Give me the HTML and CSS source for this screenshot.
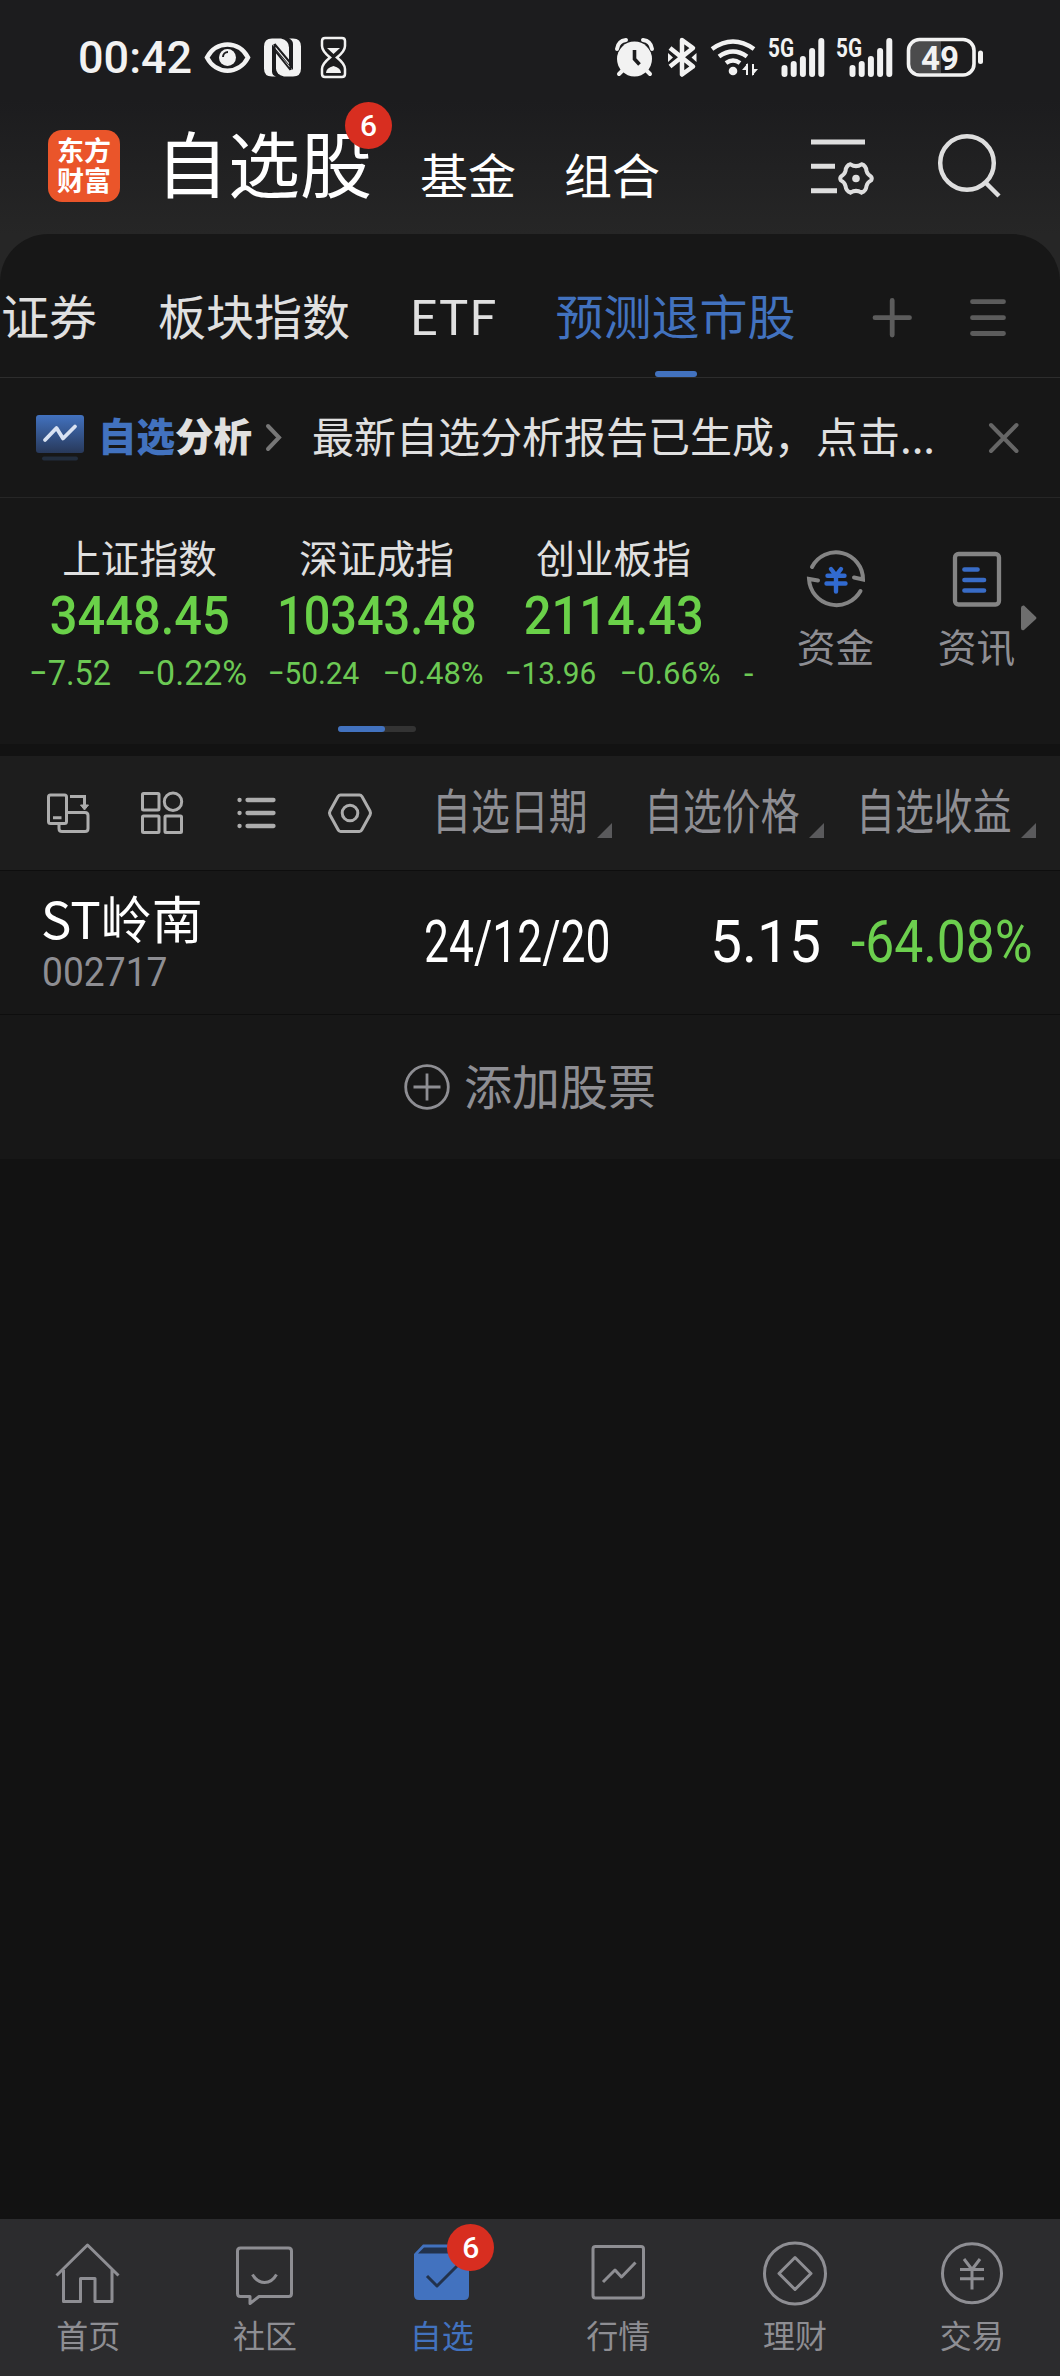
FILE: index.html
```html
<!DOCTYPE html>
<html lang="zh-CN">
<head>
    <meta charset="UTF-8">
    <meta name="viewport" content="width=device-width, initial-scale=1.0">
    <title>自选股</title>
    <link rel="stylesheet" href="styles.css">
</head>
<body>
    <div class="top">
        <!-- 状态栏 -->
        <div class="status-bar">
            <span class="clock">00:42</span>
            <svg class="status-left" width="146" height="48" viewBox="203 34 146 48">
                <path d="M207 58.500C216 41 239 41 248 58.500C239 76 216 76 207 58.500Z" fill="none" stroke="#f2f2f2" stroke-width="4.500"/>
                <circle cx="227.500" cy="58.500" r="8.500" fill="#f2f2f2"/>
                <path d="M223 58a5 5 0 0 1 5-5" fill="none" stroke="#1c1c1e" stroke-width="2"/>
                <path d="M272 39.500h9q8 2 8 9v17l-17-20v27q0 4 4 5h-4q-8 0-8-8v-22q0-8 8-8z" fill="#f2f2f2"/>
                <path d="M289 39.500h4q8 0 8 8v22q0 8-8 8h-9q-8-2-8-8V52l17 19V45q0-4-4-5.500z" fill="#f2f2f2"/>
                <path d="M274.500 45v24q0 6 5 8M290.500 71V46q0-5-4-7M274.500 45l16 19M274.500 51l16 20" fill="none" stroke="#1c1c1e" stroke-width="2"/>
                <path d="M325 39h17q3 0 3 3v5q0 5-8 11.500q8 6.500 8 11.500v5q0 3-3 3h-17q-3 0-3-3v-5q0-5 8-11.500q-8-6.500-8-11.500v-5q0-3 3-3z" fill="none" stroke="#f2f2f2" stroke-width="2.500"/>
                <path d="M327 49h13l-6.500 6zM326 74q0-5 7.500-7q7.500 2 7.500 7z" fill="#f2f2f2"/>
            </svg>
            <svg class="status-right" width="376" height="48" viewBox="612 34 376 48" fill="#f2f2f2">
                <!-- 闹钟 -->
                <circle cx="634.500" cy="60" r="17.500"/>
                <path d="M617 50q1-8 9-9M652 50q-1-8-9-9M623 71l-4 4M646 71l4 4" stroke="#f2f2f2" stroke-width="4" fill="none" stroke-linecap="round"/>
                <path d="M634.500 51v9l5 5.500" stroke="#1c1c1e" stroke-width="3.600" fill="none"/>
                <!-- 蓝牙 -->
                <path d="M670 49l23 18.500l-11 8V41l11 8L670 67.500" fill="none" stroke="#f2f2f2" stroke-width="4.500" stroke-linejoin="round"/>
                <path d="M668 54v9l5-4.500zM696.500 54v9l-5-4.500z"/>
                <!-- 无线网络 -->
                <path d="M712 50q21-15 42 0M719 57.500q14-10 28 0M726 64q7-5 14 0" fill="none" stroke="#f2f2f2" stroke-width="4.500"/>
                <circle cx="733" cy="72" r="4.300"/>
                <path d="M742 71h6v-7zM752 70h6l-6 7z"/>
                <path d="M747 65v11M753 65v11" stroke="#f2f2f2" stroke-width="2"/>
                <!-- 信号 -->
                <text x="768" y="58" class="sig-text" textLength="26" lengthAdjust="spacingAndGlyphs">5G</text>
                <path d="M784.500 69v6M793.700 65v10M802.900 60v15M812.100 52v23M821.300 42v33" stroke="#f2f2f2" stroke-width="6" stroke-linecap="round"/>
                <text x="836" y="58" class="sig-text" textLength="26" lengthAdjust="spacingAndGlyphs">5G</text>
                <path d="M852.500 69v6M861.700 65v10M870.900 60v15M880.100 52v23M889.300 42v33" stroke="#f2f2f2" stroke-width="6" stroke-linecap="round"/>
                <!-- 电池 -->
                <path d="M941 42h-21q-10 0-10 10v12q0 10 10 10h21z" fill="#4b4b4c"/>
                <rect x="908.500" y="40.500" width="65.500" height="35.500" rx="11" fill="none" stroke="#f2f2f2" stroke-width="3.600"/>
                <rect x="978" y="51.500" width="5" height="13.500" rx="2.500"/>
                <text x="921" y="70.500" class="battery-text" textLength="38" lengthAdjust="spacingAndGlyphs">49</text>
            </svg>
        </div>

        <!-- 顶部导航 -->
        <header>
            <div class="logo"><span>东方</span><span>财富</span></div>
            <h1>自选股<span class="badge">6</span></h1>
            <span class="head-tab">基金</span>
            <span class="head-tab">组合</span>
            <svg class="head-icons" width="200" height="70" viewBox="806 131 200 70" fill="none" stroke="#dedede" stroke-width="5">
                <path d="M811 144h54M811 168.300h24M811 192.700h26"/>
                <path d="M850.500 166.300Q856 170 861.500 166.300Q866 167.500 866.500 173Q867.500 176.500 871 178.500Q872.500 180.300 871 182.500Q867.500 184 866.500 188Q866 193 861.500 194.700Q856 191 850.500 194.700Q846 193 845.500 188Q844.500 184 841 182.500Q839.500 180.300 841 178.500Q844.500 176.500 845.500 173Q846 167.500 850.500 166.300Z" stroke-width="4"/>
                <circle cx="856" cy="180.500" r="3.800" fill="#dedede" stroke="none"/>
                <circle cx="967" cy="165" r="26.800" stroke-width="4.500"/>
                <path d="M985 184l14 14" stroke-width="4.500"/>
            </svg>
        </header>
    </div>

    <div class="panel">
        <!-- 分组标签 -->
        <div class="tabs">
            <span class="tab">证券</span>
            <span class="tab">板块指数</span>
            <span class="tab etf">ETF</span>
            <span class="tab active">预测退市股</span>
            <svg class="tab-icons" width="136" height="44" viewBox="872 297 136 44" stroke="#5c5c5c" stroke-width="4.800" stroke-linecap="round">
                <path d="M875 318.700h34.500M892.200 301.500v34.500M972.500 302.700h31M972.500 318.700h31M972.500 334.500h31"/>
            </svg>
        </div>

        <!-- 自选分析 -->
        <div class="report">
            <svg class="report-icon" width="48" height="46" viewBox="0 0 48 46">
                <defs>
                    <linearGradient id="blue" x1="0" y1="0" x2="0" y2="1">
                        <stop offset="0" stop-color="#4272bf"/>
                        <stop offset="1" stop-color="#28395a"/>
                    </linearGradient>
                </defs>
                <rect width="48" height="38" rx="3" fill="url(#blue)"/>
                <path d="M9 25l11.500-12l6.500 10.500l12-12" fill="none" stroke="#d9e2f2" stroke-width="3.800" stroke-linecap="round" stroke-linejoin="round"/>
                <rect x="6" y="41.500" width="36" height="4" rx="2" fill="#222d3d"/>
            </svg>
            <b><em>自选</em>分析</b>
            <svg class="report-arrow" width="18" height="30" viewBox="0 0 18 30" fill="none" stroke="#777" stroke-width="4" stroke-linecap="round">
                <path d="M3 3l11 11.500L3 26"/>
            </svg>
            <span class="report-text">最新自选分析报告已生成，点击...</span>
            <svg class="report-close" width="32" height="32" viewBox="0 0 32 32" stroke="#666" stroke-width="4" stroke-linecap="round">
                <path d="M3 3l25.500 26M28.500 3L3 29"/>
            </svg>
        </div>

        <!-- 大盘指数 -->
        <div class="market">
            <div class="indexes">
                <div class="index">
                    <div class="index-name">上证指数</div>
                    <div class="index-value"><span>3448.45</span></div>
                    <div class="index-change big"><span>−7.52</span><span>−0.22%</span></div>
                </div>
                <div class="index">
                    <div class="index-name">深证成指</div>
                    <div class="index-value long"><span>10343.48</span></div>
                    <div class="index-change"><span>−50.24</span><span>−0.48%</span></div>
                </div>
                <div class="index">
                    <div class="index-name">创业板指</div>
                    <div class="index-value"><span>2114.43</span></div>
                    <div class="index-change"><span>−13.96</span><span>−0.66%</span></div>
                </div>
                <div class="index-next">-</div>
            </div>
            <div class="entry">
                <svg width="62" height="62" viewBox="805 549 62 62" fill="none" stroke="#848484" stroke-width="4" stroke-linecap="round">
                    <path d="M812 568A27 27 0 0 1 863 580.500L854 578.500M860.500 592A27.500 27.500 0 0 1 809 580L818 581.500"/>
                    <path d="M831 570l5 6.500l5-6.500M836 577v15.500M827.500 576.800h17M826.500 584.500h19" stroke="#316ad0" stroke-width="4.400"/>
                </svg>
                <span>资金</span>
            </div>
            <div class="entry">
                <svg width="62" height="62" viewBox="946 549 62 62" fill="none" stroke="#848484" stroke-width="4.300" stroke-linecap="round">
                    <rect x="955" y="555" width="44" height="50.500" rx="3.500"/>
                    <path d="M964.500 570.500h13M964.500 581h19.500M964.500 591.500h19.500" stroke="#396cc6" stroke-width="4.700"/>
                </svg>
                <span>资讯</span>
            </div>
            <svg class="more" width="16" height="26" viewBox="0 0 16 26"><path d="M0 3q0-3 3-2.500L15 12q1 1 0 2L3 25q-3 1-3-2z" fill="#6e6e6e"/></svg>
        </div>
        <div class="pager"><span></span></div>
    </div>

    <!-- 表头 -->
    <div class="table-head">
        <svg class="tools" width="330" height="46" viewBox="44 791 330 46" fill="none" stroke="#adadad" stroke-width="3">
            <rect x="48.500" y="796" width="18" height="28.500" rx="2"/>
            <path d="M53 818.700h8.500M70 797.500h14.500v9M67 813.500h18q3 0 3 3v13q0 3-3 3H62q-3 0-3-3v-5"/>
            <path d="M80.500 806h8l-4 5z" fill="#adadad" stroke-width="1"/>
            <rect x="142.500" y="794.500" width="16.500" height="16.500" rx="1"/>
            <circle cx="173" cy="802.700" r="8.700"/>
            <rect x="142.500" y="817" width="16.500" height="16.500" rx="1"/>
            <rect x="165" y="817" width="16.500" height="16.500" rx="1"/>
            <path d="M247.500 801h26M247.500 814h26M247.500 827h26M239.500 801h.100M239.500 814h.100M239.500 827h.100" stroke-width="4.300" stroke-linecap="round"/>
            <path d="M340.500 796h19q1.500 0 2.500 1.500l8 14.500q1 2 0 4l-8 14.500q-1 2-2.500 2h-19q-1.500 0-2.500-2l-8-14.500q-1-2 0-4l8-14.500q1-1.500 2.500-1.500z"/>
            <circle cx="350" cy="814" r="7.800"/>
        </svg>
        <div class="th"><span>自选日期</span></div>
        <div class="th"><span>自选价格</span></div>
        <div class="th"><span>自选收益</span></div>
    </div>

    <!-- 股票列表 -->
    <div class="stock">
        <div class="stock-name">
            <div class="name">ST岭南</div>
            <div class="code">002717</div>
        </div>
        <span class="date">24/12/20</span>
        <span class="price">5.15</span>
        <span class="profit">-64.08%</span>
    </div>
    <div class="add">
        <svg width="46" height="46" viewBox="0 0 46 46" fill="none" stroke="#8e8e93" stroke-width="2.800">
            <circle cx="23" cy="23" r="21.300"/>
            <path d="M9.500 23h27M23 9.500v27"/>
        </svg>
        <span>添加股票</span>
    </div>

    <!-- 底部导航 -->
    <nav>
        <div class="nav-item">
            <svg width="70" height="64" viewBox="53 2241 70 64">
                <path d="M56.500 2276.500L87.500 2246l31 30.500M63.500 2271v31.500h17v-23h14.500v23h17V2271"/>
            </svg>
            <span>首页</span>
        </div>
        <div class="nav-item">
            <svg width="70" height="64" viewBox="229 2241 70 64">
                <path d="M239.500 2249h48q3 0 3 3v42.500q0 3-3 3H258l-9 7v-7h-9.500q-3 0-3-3V2252q0-3 3-3zM251.500 2275.500q4.500 8 12 8t12-8"/>
            </svg>
            <span>社区</span>
        </div>
        <div class="nav-item active">
            <svg width="70" height="64" viewBox="406 2241 70 64">
                <path d="M413 2255l9-9.500h37l9 9.500v41q0 5-5 5h-45q-5 0-5-5z" fill="#4272bf" stroke="none"/>
                <path d="M417 2254.500l6-6h35l6 6z" fill="#22324c" stroke="none"/>
                <path d="M426 2277l10 10l22-22" stroke="#22324c"/>
            </svg>
            <span>自选</span>
            <span class="badge">6</span>
        </div>
        <div class="nav-item">
            <svg width="70" height="64" viewBox="582 2241 70 64">
                <rect x="592" y="2247.500" width="50.500" height="51.500" rx="2.500"/>
                <path d="M602 2283l12-12l6.500 7l14-14.500"/>
            </svg>
            <span>行情</span>
        </div>
        <div class="nav-item">
            <svg width="70" height="64" viewBox="759.500 2241 70 64">
                <circle cx="794.500" cy="2274.500" r="30.500"/>
                <path d="M794.500 2258.500l16 16l-16 16l-16-16z"/>
            </svg>
            <span>理财</span>
        </div>
        <div class="nav-item">
            <svg width="70" height="64" viewBox="936 2241 70 64">
                <circle cx="971" cy="2274.300" r="29.500"/>
                <path d="M963 2260l8 10.500l8-10.500M971 2270v20.500M959 2270.500h24M959 2279.800h24"/>
            </svg>
            <span>交易</span>
        </div>
    </nav>
</body>
</html>
```
FILE: styles.css
```css
* {
    box-sizing: border-box;
}

body {
    margin: 0;
    width: 1060px;
    height: 2376px;
    display: flex;
    flex-direction: column;
    background-color: #121212;
    color: #e0e0e0;
    font-family: "Noto Sans CJK SC", sans-serif;
    overflow: hidden;
}

svg {
    display: block;
    flex: none;
}

/* 顶部区域 */
.top {
    height: 290px;
    flex: none;
    background: linear-gradient(#1c1c1e 100px, #262626 234px);
}

.status-bar {
    height: 110px;
    display: flex;
    align-items: flex-start;
    padding: 33px 72px 0 78px;
}

.clock {
    width: 125px;
    line-height: 50px;
    font-family: Roboto, sans-serif;
    font-size: 45px;
    font-weight: 500;
    color: #f2f2f2;
}

.status-right {
    margin-left: auto;
}

.sig-text {
    font: 700 26px Roboto, sans-serif;
}

.battery-text {
    font: 700 34px Roboto, sans-serif;
}

header {
    display: flex;
    height: 124px;
    padding-left: 48px;
    color: #fff;
}

.logo {
    width: 72px;
    height: 72px;
    margin: 20px 36px 0 0;
    padding-top: 5px;
    border-radius: 14px;
    background-color: #ea552a;
    display: flex;
    flex-direction: column;
    align-items: center;
    font-size: 27px;
    font-weight: 700;
    line-height: 30px;
}

h1 {
    position: relative;
    margin: 0;
    width: 264px;
    font-size: 72px;
    font-weight: 400;
    line-height: 102px;
}

.badge {
    position: absolute;
    width: 47px;
    height: 47px;
    border-radius: 50%;
    background-color: #d82e20;
    color: #fff;
    font-family: Roboto, sans-serif;
    font-size: 30px;
    font-weight: 500;
    line-height: 47px;
    text-align: center;
}

h1 .badge {
    left: 189px;
    top: -8px;
}

.head-tab {
    width: 144px;
    font-size: 48px;
    line-height: 127px;
}

.head-icons {
    margin: 19px 0 0 98px;
}

/* 面板 */
.panel {
    margin-top: -56px;
    height: 510px;
    flex: none;
    border-radius: 48px 48px 0 0;
    background-color: #171717;
}

.tabs {
    height: 144px;
    display: flex;
    padding-left: 1px;
    border-bottom: 1px solid #2d2d2d;
    font-size: 48px;
    line-height: 160px;
}

.tab {
    margin-right: 61px;
    white-space: nowrap;
}

.tab.etf {
    transform: scaleX(1.04);
}

.tab.active {
    position: relative;
    margin-right: 76px;
    color: #4272bf;
}

.tab.active::after {
    content: "";
    position: absolute;
    left: 99px;
    bottom: 0;
    width: 42px;
    height: 6px;
    border-radius: 3px;
    background-color: #4272bf;
}

.tab-icons {
    margin-top: 62px;
}

.report {
    height: 120px;
    display: flex;
    padding-left: 36px;
    border-bottom: 1px solid #262626;
    line-height: 113px;
}

.report-icon {
    margin: 37px 14px 0 0;
}

.report b {
    width: 167px;
    font-size: 38.500px;
    font-weight: 900;
}

.report em {
    font-style: normal;
    color: #4272bf;
}

.report-arrow {
    margin: 45px 29px 0 0;
}

.report-text {
    width: 676px;
    font-size: 42px;
    white-space: nowrap;
}

.report-close {
    margin-top: 44px;
}

/* 指数 */
.market {
    height: 228px;
    display: flex;
    padding-left: 21px;
}

.indexes {
    width: 744px;
    display: flex;
}

.index {
    width: 237px;
    flex: none;
    text-align: center;
}

.index-name {
    margin-top: 31px;
    font-size: 38.700px;
    line-height: 54px;
}

.index-value {
    height: 62px;
    display: flex;
    justify-content: center;
    font-family: Roboto, sans-serif;
    font-size: 53px;
    font-weight: 500;
    line-height: 67px;
    color: #6ad149;
}

.index-value span {
    transform: scaleX(0.92);
}

.index-value.long span {
    transform: scaleX(0.885);
}

.index-change {
    display: flex;
    justify-content: center;
    gap: 18px;
    margin-left: -4px;
    font-family: Roboto, sans-serif;
    font-size: 32px;
    line-height: 57px;
    white-space: nowrap;
    color: #6cc954;
}

.index-change span {
    transform: scaleX(0.93);
}

.index-change span:last-child {
    transform: scaleX(0.97);
}

.index-change.big {
    gap: 21px;
    font-size: 35px;
}

.index-next {
    margin: 147px 0 0 12px;
    font-family: Roboto, sans-serif;
    font-size: 34px;
    line-height: 56px;
    color: #6cc954;
}

.entry {
    width: 141px;
    display: flex;
    flex-direction: column;
    align-items: center;
    padding-top: 50px;
    font-size: 38.700px;
    line-height: 70px;
    color: #8e8e93;
}

.more {
    margin: 107px 0 0 -26px;
}

.pager {
    width: 78px;
    height: 6px;
    margin-left: 338px;
    border-radius: 3px;
    background-color: #333;
}

.pager span {
    display: block;
    width: 47px;
    height: 6px;
    border-radius: 3px;
    background-color: #4272bf;
}

/* 表头 */
.table-head {
    height: 115px;
    flex: none;
    margin-top: 12px;
    display: flex;
    padding-left: 44px;
    background-color: #1d1d1d;
    border-bottom: 1px solid #0e0e0e;
}

.tools {
    margin: 34px 58px 0 0;
}

.th {
    width: 180px;
    margin-right: 32px;
    flex: none;
    display: flex;
    justify-content: space-between;
    align-items: flex-start;
    font-size: 48px;
    line-height: 104px;
    color: #8e8e93;
}

.th span {
    width: 148px;
    white-space: nowrap;
    transform: scaleX(0.81);
    transform-origin: left;
}

.th::after {
    content: "";
    flex: none;
    margin-top: 67px;
    border-left: 15px solid transparent;
    border-bottom: 15px solid #5a5a5c;
}

/* 股票行 */
.stock {
    height: 144px;
    flex: none;
    display: flex;
    padding-left: 41px;
    background-color: #171717;
    border-bottom: 1px solid #0e0e0e;
    font-family: Roboto, sans-serif;
    font-size: 60px;
    line-height: 141px;
    color: #fff;
}

.stock-name {
    width: 383px;
    flex: none;
}

.name {
    margin-top: 13px;
    font-family: "Noto Sans CJK SC", sans-serif;
    font-size: 51px;
    line-height: 66px;
}

.code {
    margin: 2px 0 0 1px;
    font-size: 40px;
    line-height: 42px;
    color: #8e8e93;
    transform: scaleX(0.93);
    transform-origin: left;
}

.date,
.price,
.profit {
    flex: none;
    transform-origin: left;
}

.date {
    width: 286px;
    transform: scaleX(0.74);
}

.price {
    width: 141px;
    transform: scaleX(0.95);
}

.profit {
    color: #6ccf4e;
    transform: scaleX(0.86);
}

.add {
    height: 144px;
    flex: none;
    display: flex;
    justify-content: center;
    align-items: center;
    gap: 14px;
    background-color: #171717;
    font-size: 48px;
    color: #8e8e93;
}

.add span {
    margin-top: -6px;
}

/* 底部导航 */
nav {
    height: 157px;
    flex: none;
    margin-top: auto;
    display: flex;
    background-color: #2c2c2e;
}

.nav-item {
    position: relative;
    flex: 1;
    display: flex;
    flex-direction: column;
    align-items: center;
    padding-top: 21px;
    font-size: 32px;
    line-height: 48px;
    color: #8e8e93;
}

.nav-item svg {
    margin-bottom: 6px;
    overflow: visible;
    fill: none;
    stroke: #8e8e93;
    stroke-width: 3;
    stroke-linejoin: round;
}

.nav-item.active {
    color: #4272bf;
}

.nav-item .badge {
    left: 94px;
    top: 5px;
}
```
